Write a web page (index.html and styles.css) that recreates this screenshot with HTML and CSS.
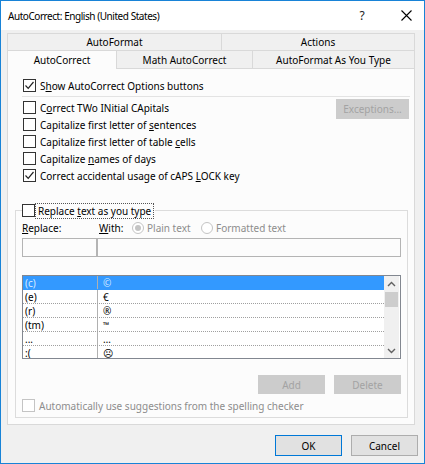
FILE: index.html
```html
<!DOCTYPE html>
<html>
<head>
<meta charset="utf-8">
<link rel="stylesheet" href="styles.css">
</head>
<body>
<div class="window">
  <div class="titlebar">
    <span class="title">AutoCorrect: English (United States)</span>
    <span class="help">?</span>
    <span class="close"><svg width="11" height="11" viewBox="0 0 11 11"><path d="M0.5 0.5 L10.5 10.5 M10.5 0.5 L0.5 10.5" stroke="#000" stroke-width="1.1" fill="none"/></svg></span>
  </div>
  <div class="body">
    <div class="tabs">
      <div class="tabrow">
        <div class="tab t-af">AutoFormat</div>
        <div class="tab t-actions">Actions</div>
      </div>
      <div class="tabrow front">
        <div class="tab t-ac selected">AutoCorrect</div>
        <div class="tab t-math">Math AutoCorrect</div>
        <div class="tab t-afayt">AutoFormat As You Type</div>
      </div>
    </div>
    <div class="panel">
      <div class="row show-row">
        <span class="cb checked"><svg width="11" height="11" viewBox="0 0 11 11"><path d="M1.5 5.5 L4.2 8.3 L9.5 2" stroke="#222" stroke-width="1.2" fill="none"/></svg></span>
        <span class="lbl">S<u>h</u>ow AutoCorrect Options buttons</span>
      </div>
      <div class="sep"></div>
      <div class="options">
        <div class="opt-col">
          <div class="row"><span class="cb"></span><span class="lbl">C<u>o</u>rrect TWo INitial CApitals</span></div>
          <div class="row"><span class="cb"></span><span class="lbl">Capitalize first letter of <u>s</u>entences</span></div>
          <div class="row"><span class="cb"></span><span class="lbl">Capitalize first letter of table <u>c</u>ells</span></div>
          <div class="row"><span class="cb"></span><span class="lbl">Capitalize <u>n</u>ames of days</span></div>
          <div class="row"><span class="cb checked"><svg width="11" height="11" viewBox="0 0 11 11"><path d="M1.5 5.5 L4.2 8.3 L9.5 2" stroke="#222" stroke-width="1.2" fill="none"/></svg></span><span class="lbl">Correct accidental usage of cAPS <u>L</u>OCK key</span></div>
        </div>
        <div class="btn disabled exceptions">Exceptions...</div>
      </div>
      <div class="group">
        <div class="group-head">
          <span class="cb"></span><span class="lbl focus">Replace <u>t</u>ext as you type</span>
        </div>
        <div class="labels">
          <span class="l-replace"><u>R</u>eplace:</span>
          <span class="l-with"><u>W</u>ith:</span>
          <span class="radio on"><span class="dot"></span></span><span class="rtext">Plain text</span>
          <span class="radio r2"></span><span class="rtext">Formatted text</span>
        </div>
        <div class="inputs">
          <div class="in in-replace"></div>
          <div class="in in-with"></div>
        </div>
        <div class="list">
          <div class="rows">
            <div class="lrow sel"><span class="k">(c)</span><span class="v">©</span></div>
            <div class="lrow"><span class="k">(e)</span><span class="v">€</span></div>
            <div class="lrow"><span class="k">(r)</span><span class="v">®</span></div>
            <div class="lrow"><span class="k">(tm)</span><span class="v tm">™</span></div>
            <div class="lrow"><span class="k">...</span><span class="v">…</span></div>
            <div class="lrow"><span class="k">:(</span><span class="v">☹</span></div>
          </div>
          <div class="scrollbar">
            <div class="arrow"><svg width="9" height="6" viewBox="0 0 9 6"><path d="M1 5 L4.5 1.5 L8 5" stroke="#606060" stroke-width="1.4" fill="none"/></svg></div>
            <div class="thumb"></div>
            <div class="track"></div>
            <div class="arrow"><svg width="9" height="6" viewBox="0 0 9 6"><path d="M1 1 L4.5 4.5 L8 1" stroke="#606060" stroke-width="1.4" fill="none"/></svg></div>
          </div>
        </div>
        <div class="list-buttons">
          <div class="btn disabled">Add</div>
          <div class="btn disabled">Delete</div>
        </div>
        <div class="row spell-row">
          <span class="cb dis"></span><span class="lbl dis-text">Automatically use suggestions from the spelling checker</span>
        </div>
      </div>
    </div>
    <div class="footer">
      <div class="btn default">OK</div>
      <div class="btn">Cancel</div>
    </div>
  </div>
</div>
</body>
</html>
```

FILE: styles.css
```css
* { box-sizing: border-box; }
html, body { margin: 0; padding: 0; }
body {
  font-family: "Noto Sans", "Open Sans", "Liberation Sans", sans-serif;
  font-size: 10px;
  color: #000;
  background: #fff;
}
u { text-decoration: underline; text-underline-offset: 1px; }

.window {
  width: 425px;
  height: 464px;
  border: 1px solid #1883d7;
  display: flex;
  flex-direction: column;
  background: #f0f0f0;
}

.titlebar {
  height: 29px;
  background: #fff;
  display: flex;
  align-items: center;
  padding-left: 7px;
  flex: none;
}
.title { font-size: 10px; letter-spacing: -0.45px; flex: 1; }
.help { font-size: 12px; width: 10px; margin-right: 34px; text-align: center; color: #222; }
.close { width: 14px; margin-right: 9px; display: flex; align-items: center; }

.body {
  flex: 1;
  background: #f0f0f0;
  padding: 3px 0 0 6px;
  display: flex;
  flex-direction: column;
}

.tabs { width: 408px; }
.tabrow { display: flex; height: 17px; }
.tabrow.front { height: 18px; }
.tab {
  border: 1px solid #d9d9d9;
  border-bottom: none;
  border-right: none;
  display: flex;
  align-items: center;
  justify-content: center;
  background: #f0f0f0;
  font-size: 10px;
}
.tab:last-child { border-right: 1px solid #d9d9d9; }
.t-af { width: 214px; }
.t-actions { width: 194px; }
.t-ac { width: 110px; }
.t-math { width: 135px; }
.t-afayt { width: 163px; }
.tab.selected {
  background: #fcfcfc;
  height: 19px;
  margin-bottom: -1px;
  position: relative;
  z-index: 1;
  border-right: 1px solid #d9d9d9;
}
.tab.t-math { border-left: none; }

.panel {
  width: 408px;
  height: 357px;
  border: 1px solid #d9d9d9;
  background: #fcfcfc;
  flex: none;
}

.row {
  height: 17px;
  display: flex;
  align-items: center;
  padding-left: 15px;
  white-space: nowrap;
}
.cb {
  width: 13px;
  height: 13px;
  border: 1px solid #333;
  background: #fff;
  display: inline-flex;
  align-items: center;
  justify-content: center;
  flex: none;
}
.cb.dis { border-color: #c4c4c4; }
.lbl { margin-left: 3px; padding: 0 1px; }
.dis-text { color: #8d8d8d; }

.show-row { margin-top: 8px; }
.sep {
  height: 1px;
  background: #e3e3e3;
  margin: 2px 4px 0 14px;
}

.options {
  display: flex;
  justify-content: space-between;
  align-items: flex-start;
  margin-top: 2px;
}
.opt-col { display: flex; flex-direction: column; }

.btn {
  width: 67px;
  height: 20px;
  border: 1px solid #adadad;
  background: #e1e1e1;
  display: flex;
  align-items: center;
  justify-content: center;
}
.btn.disabled {
  background: #cccccc;
  border-color: #cccccc;
  color: #a3a3a3;
}
.exceptions { width: 73px; margin-right: 5px; }
.btn.default { border-color: #0078d7; }

.group {
  margin: 26px 6px 0 7px;
  height: 208px;
  border: 1px solid #dcdcdc;
  padding: 0 6px 0 6px;
}
.group-head {
  display: flex;
  width: max-content;
  align-items: center;
  height: 17px;
  margin-top: -9px;
  background: #fcfcfc;
  padding-right: 2px;
}
.focus {
  outline: 1px dotted #555;
  outline-offset: 0;
  margin-left: 1px;
  padding: 0 2px;
}
.labels {
  display: flex;
  align-items: center;
  height: 16px;
  margin-top: 1px;
  white-space: nowrap;
}
.l-replace { width: 77px; }
.l-with { width: 33px; }
.radio {
  width: 12px;
  height: 12px;
  border: 1px solid #c4c4c4;
  border-radius: 50%;
  background: #fff;
  display: inline-flex;
  align-items: center;
  justify-content: center;
  flex: none;
}
.radio .dot { width: 6px; height: 6px; border-radius: 50%; background: #c4c4c4; }
.rtext { color: #8d8d8d; margin-left: 3px; width: 54px; }

.inputs {
  display: flex;
  margin-top: 2px;
  height: 19px;
}
.in { border: 1px solid #b4b4b4; background: #fcfcfc; height: 19px; }
.in-replace { width: 75px; }
.in-with { width: 304px; }

.list {
  margin-top: 18px;
  width: 379px;
  height: 84px;
  border: 1px solid #828790;
  background: #fff;
  display: flex;
  overflow: hidden;
}
.rows { flex: 1; overflow: hidden; }
.lrow {
  height: 14px;
  display: flex;
  align-items: center;
  border-bottom: 1px dotted #a0a0a0;
}
.lrow.sel { background: #3399ff; color: #d8ebff; border-bottom-color: #3399ff; }
.k {
  width: 75px;
  padding-left: 2px;
  border-right: 1px solid #b0b0b0;
  height: 100%;
  display: flex;
  align-items: center;
}
.v { padding-left: 5px; }
.tm { font-size: 8px; }
.scrollbar {
  width: 15px;
  margin-right: 1px;
  background: #f0f0f0;
  display: flex;
  flex-direction: column;
}
.arrow { height: 15px; display: flex; align-items: center; justify-content: center; }
.thumb { height: 15px; background: #cdcdcd; margin: 1px 1px 0 1px; }
.track { flex: 1; }

.list-buttons {
  display: flex;
  justify-content: flex-end;
  gap: 9px;
  margin-top: 16px;
}
.list-buttons .btn { width: 67px; height: 19px; }
.spell-row { padding-left: 0; margin-top: 3px; }

.footer {
  display: flex;
  justify-content: flex-end;
  gap: 9px;
  margin-top: 10px;
  padding-right: 6px;
}
.footer .btn { width: 67px; height: 21px; }
```
